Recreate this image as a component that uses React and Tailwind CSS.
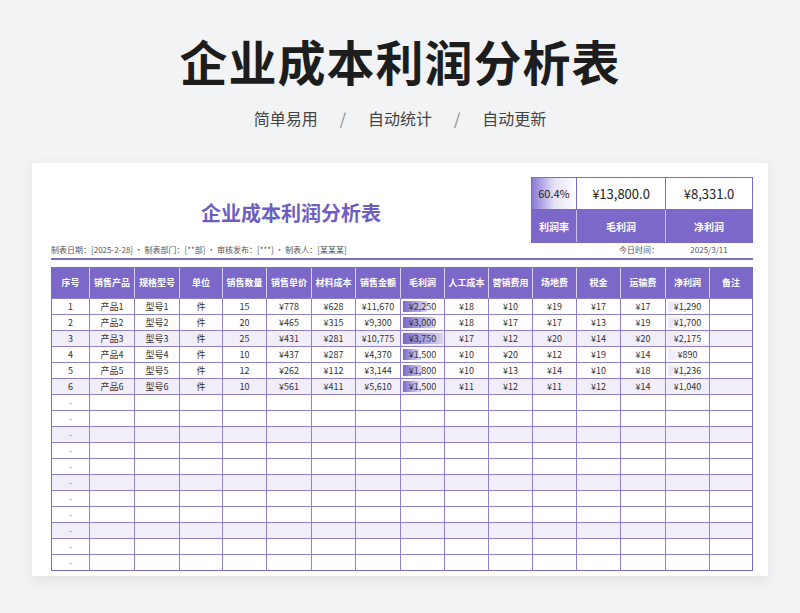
import React from "react";

const cols = ["序号", "销售产品", "规格型号", "单位", "销售数量", "销售单价", "材料成本", "销售金额", "毛利润", "人工成本", "营销费用", "场地费", "税金", "运输费", "净利润", "备注"];
const widths = ["w-[38px]", "w-[45px]", "w-[45px]", "w-[43px]", "w-[44px]", "w-[45px]", "w-[44px]", "w-[45px]", "w-[44px]", "w-[44px]", "w-[44px]", "w-[44px]", "w-[44px]", "w-[45px]", "w-[44px]", "flex-1"];

const rows = [
  ["1", "产品1", "型号1", "件", "15", "¥778", "¥628", "¥11,670", "¥2,250", "¥18", "¥10", "¥19", "¥17", "¥17", "¥1,290", ""],
  ["2", "产品2", "型号2", "件", "20", "¥465", "¥315", "¥9,300", "¥3,000", "¥18", "¥17", "¥17", "¥13", "¥19", "¥1,700", ""],
  ["3", "产品3", "型号3", "件", "25", "¥431", "¥281", "¥10,775", "¥3,750", "¥17", "¥12", "¥20", "¥14", "¥20", "¥2,175", ""],
  ["4", "产品4", "型号4", "件", "10", "¥437", "¥287", "¥4,370", "¥1,500", "¥10", "¥20", "¥12", "¥19", "¥14", "¥890", ""],
  ["5", "产品5", "型号5", "件", "12", "¥262", "¥112", "¥3,144", "¥1,800", "¥10", "¥13", "¥14", "¥10", "¥18", "¥1,236", ""],
  ["6", "产品6", "型号6", "件", "10", "¥561", "¥411", "¥5,610", "¥1,500", "¥11", "¥12", "¥11", "¥12", "¥14", "¥1,040", ""],
];
const bars = [60, 80, 100, 40, 48, 40];
const netBars = [59, 78, 100, 41, 57, 48];

export default function App() {
  const all = [...rows, ...Array.from({ length: 11 }, () => ["-", "", "", "", "", "", "", "", "", "", "", "", "", "", "", ""])];
  return (
    <div className="w-[800px] h-[613px] overflow-hidden bg-[#f2f3f5] flex flex-col items-center" style={{ fontFamily: '"Noto Sans CJK SC", "Noto Sans", sans-serif' }}>
      <h1 className="mt-[28px] text-[48px] leading-[64px] font-bold text-[#1d1d1d] tracking-[1px]">企业成本利润分析表</h1>
      <div className="mt-[14px] flex items-center gap-[22px] text-[16px] text-[#444]">
        <span>简单易用</span><span className="text-[#888]">/</span><span>自动统计</span><span className="text-[#888]">/</span><span>自动更新</span>
      </div>
      <div className="mt-[33px] w-[736px] h-[413px] bg-white shadow-[0_4px_14px_rgba(0,0,0,0.08)] overflow-hidden pl-[19px] pr-[15px] pt-[14px]">
        <div className="flex">
          <div className="flex-1 flex items-center justify-center pt-[6px]">
            <span className="text-[20px] font-bold text-[#6e5ec2]">企业成本利润分析表</span>
          </div>
          <div className="w-[222px] border border-[#7b68c8] text-[#222]">
            <div className="flex h-[32px] border-b border-[#7b68c8]">
              <div className="w-[45px] border-r border-[#7b68c8] flex items-center justify-center text-[11px] bg-gradient-to-r from-[#8a78d4] via-[#e6e1f6] to-white">60.4%</div>
              <div className="w-[89px] border-r border-[#7b68c8] flex items-center justify-center text-[13px]">¥13,800.0</div>
              <div className="flex-1 flex items-center justify-center text-[13px]">¥8,331.0</div>
            </div>
            <div className="flex h-[32px] bg-[#7b68c8] text-white text-[10px] font-bold">
              <div className="w-[45px] border-r border-white/60 flex items-center justify-center">利润率</div>
              <div className="w-[89px] border-r border-white/60 flex items-center justify-center">毛利润</div>
              <div className="flex-1 flex items-center justify-center">净利润</div>
            </div>
          </div>
        </div>
        <div className="flex items-center text-[8px] text-[#555] border-b-2 border-[#7b68c8] pb-[2px] h-[17px]">
          <span className="flex-1">制表日期：[2025-2-28] · 制表部门：[**部] · 审核发布：[***] · 制表人：[某某某]</span>
          <span className="w-[88px] text-right pr-[6px]">今日时间：</span>
          <span className="w-[88px] text-center">2025/3/11</span>
        </div>
        <div className="mt-[7px] border border-[#7b68c8]">
          <div className="flex h-[30px] bg-[#7b68c8] text-white text-[9px] font-bold">
            {cols.map((c, i) => (
              <div key={i} className={`${widths[i]} shrink-0 flex items-center justify-center ${i < 15 ? "border-r border-white/70" : ""}`}>{c}</div>
            ))}
          </div>
          {all.map((r, ri) => (
            <div key={ri} className={`flex h-[16px] border-t border-[#8f80d0] text-[9px] text-[#333] ${ri % 3 === 2 ? "bg-[#f1eefa]" : "bg-white"}`}>
              {r.map((c, i) => (
                <div key={i} className={`${widths[i]} shrink-0 relative flex items-center justify-center ${i < 15 ? "border-r border-[#8f80d0]" : ""}`}>
                  {i === 8 && ri < 6 && (
                    <div className="absolute left-[2px] top-[2px] bottom-[2px] bg-gradient-to-r from-[#7b68c8] to-[#ddd6f3]" style={{ width: `${bars[ri] * 0.4}px` }} />
                  )}
                  {i === 14 && ri < 6 && (
                    <div className="absolute left-[2px] top-[2px] bottom-[2px] bg-gradient-to-r from-[#ece8f8] to-white" style={{ width: `${netBars[ri] * 0.4}px` }} />
                  )}
                  <span className={`relative ${i === 0 && ri >= 6 ? "text-[#888]" : ""}`}>{c}</span>
                </div>
              ))}
            </div>
          ))}
        </div>
      </div>
    </div>
  );
}
